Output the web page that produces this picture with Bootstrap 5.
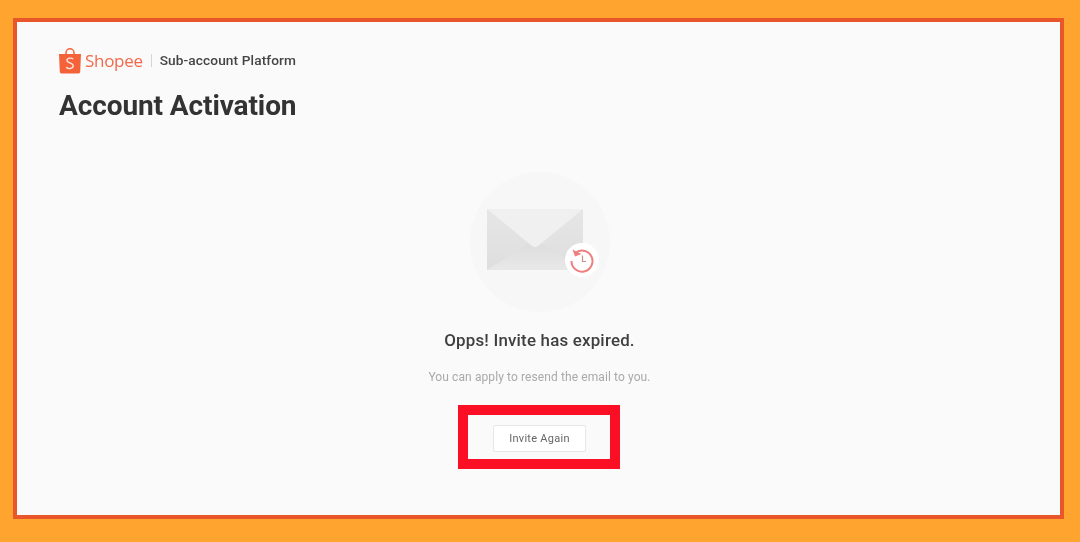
<!DOCTYPE html>
<html lang="en">
<head>
<meta charset="utf-8">
<title>Account Activation</title>
<link href="https://cdn.jsdelivr.net/npm/bootstrap@5.3.0/dist/css/bootstrap.min.css" rel="stylesheet">
<style>
html,body{height:100%;margin:0;overflow:hidden}
body{background:#ffa42e;font-family:Roboto,"Liberation Sans",sans-serif;padding:18px 16px 23px 13px}
.panel{height:100%;background:#fafafa;border:4px solid #e8562a;padding:22px 42px 0 42px;filter:blur(.45px)}
.brand-row{height:33px;gap:4px}
.shop-word{font-size:17px;color:#f3694a;letter-spacing:-.3px;line-height:1;font-family:"Open Sans","Liberation Sans",sans-serif}
.sep{width:1px;height:13px;background:#d4d4d4;margin:0 4px 0 4px}
.sub-name{font-size:13.7px;font-weight:500;color:#444;letter-spacing:.1px}
.page-title{font-size:28px;font-weight:700;color:#333;line-height:34px;margin:12px 0 0;letter-spacing:-.1px}
.stage{margin-top:49px}
.disc{width:140px;height:140px;border-radius:50%;background:#f7f7f7;margin-left:2px}
.disc svg{display:block}
.msg-title{font-size:16.9px;font-weight:500;color:#3f3f3f;line-height:20px;margin:18px 0 0 2px;letter-spacing:.2px}
.msg-sub{font-size:12px;color:#a9a9a9;line-height:14px;margin:20px 0 0 2px;letter-spacing:.1px}
.hilite{width:162px;height:64px;border:10px solid #fa0f24;margin-top:21px}
.again{width:93px;height:27px;padding:0;margin:3px 0 0 2px;font-size:11px;color:#666;background:#fff;border:1px solid #e8e8e8;border-radius:2px;letter-spacing:.28px;font-weight:400;line-height:1}
</style>
</head>
<body>
<main class="panel">
  <div class="brand-row d-flex align-items-center">
    <svg width="22" height="26" viewBox="0 0 22 26" aria-hidden="true">
      <path d="M0 6H22L21.200 23.800a1.700 1.700 0 0 1-1.700 1.600H2.500A1.700 1.700 0 0 1 .8 23.800Z" fill="#f4623a"/>
      <path d="M7 6.500V4.800a4 4 0 0 1 8 0V6.500" fill="none" stroke="#f4623a" stroke-width="1.500"/>
      <path d="M14.200 11c-1.200-1.100-5.800-1.700-6.300 1.100-.4 3.100 6.800 2.600 6.300 6.100-.4 2.900-5.200 2.900-7 1" fill="none" stroke="#fff" stroke-width="1.300" opacity=".85"/>
    </svg>
    <span class="shop-word">Shopee</span>
    <span class="sep"></span>
    <span class="sub-name">Sub-account Platform</span>
  </div>
  <h1 class="page-title">Account Activation</h1>
  <section class="stage d-flex flex-column align-items-center">
    <div class="disc d-flex align-items-center justify-content-center">
      <svg width="140" height="140" viewBox="0 0 140 140" aria-hidden="true">
        <defs>
          <linearGradient id="lower" x1="0" y1="0" x2="0" y2="1"><stop offset="0" stop-color="#dcdcdc"/><stop offset="1" stop-color="#e8e8e8"/></linearGradient>
          <linearGradient id="side" x1="0" y1="0" x2="0" y2="1"><stop offset="0" stop-color="#e6e6e6"/><stop offset="1" stop-color="#dedede"/></linearGradient>
        </defs>
        <rect x="17" y="37" width="96" height="61" fill="url(#side)"/>
        <path d="M17 98 L62 69 Q65 67 68 69 L113 98Z" fill="url(#lower)"/>
        <path d="M17 37H113L68 74Q65 76 62 74Z" fill="#f0f0f0"/>
        <circle cx="112" cy="88" r="17" fill="#fff"/>
        <path d="M106 80.500a10.500 10.500 0 1 1-4.500 8.500" fill="none" stroke="#ef8080" stroke-width="2"/>
        <path d="M102.500 77.500 L105 84.500 L111.500 82Z" fill="#ef8080"/>
        <path d="M112.500 83.500V89.500H116" fill="none" stroke="#c98a8a" stroke-width="1.200"/>
      </svg>
    </div>
    <h2 class="msg-title">Opps! Invite has expired.</h2>
    <p class="msg-sub">You can apply to resend the email to you.</p>
    <div class="hilite d-flex align-items-center justify-content-center">
      <button type="button" class="btn again">Invite Again</button>
    </div>
  </section>
</main>
</body>
</html>
